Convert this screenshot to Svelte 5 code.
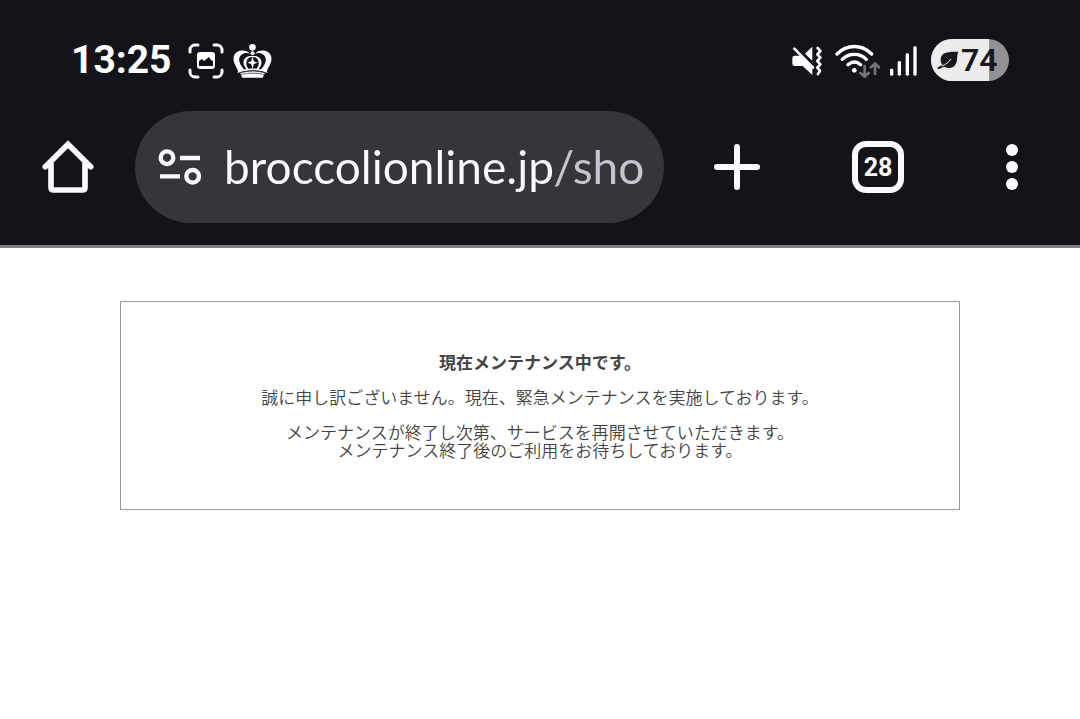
<script>
  let { time = '13:25', battery = 74, tabs = 28 } = $props();
  let url = $state('broccolionline.jp/sho');
</script>

<header>
  <div class="status">
    <time>{time}</time>
    <div class="notices">
      <svg width="36" height="36" viewBox="0 0 36 36" fill="none" aria-hidden="true">
        <path d="M2 9V7a5 5 0 0 1 5-5h3M26 2h3a5 5 0 0 1 5 5v2M34 27v2a5 5 0 0 1-5 5h-3M10 34H7a5 5 0 0 1-5-5v-2" stroke="#fff" stroke-width="3" stroke-linecap="round" />
        <rect x="9" y="9" width="18" height="17" rx="3" fill="#fff" />
        <path d="M11 23v-5l3-2 2 2 5-4 2 3 2 1v5z" fill="#131419" />
      </svg>
      <svg width="39" height="34" viewBox="0 0 116 102" fill="#fff" aria-hidden="true">
        <circle cx="58" cy="10" r="10" />
        <circle cx="58" cy="28" r="6" />
        <path fill-rule="evenodd" d="M50 29C38 14 2 16 1 44c0 16 12 26 14 40l-4 4c28-12 66-12 94 0l-4-4c2-14 14-24 14-40C114 16 78 14 66 29c12-6 32 0 32 18 0 12-10 22-14 29-4 0-6 0-8-1 14-14 12-34-8-39H48c-20 5-22 25-8 39-2 1-4 1-8 1-4-7-14-17-14-29 0-18 20-24 32-18z" />
        <path d="M49 40c-11 7-13 23-3 34 8-1 16-1 24 0 10-11 8-27-3-34z" fill="#131419" />
        <path d="M58 39l4 13 11 4-11 4-4 14-4-14-11-4 11-4z" />
        <path d="M18 88c26-9 54-9 80 0l-6 4c-22-6-46-6-68 0z" stroke="#131419" stroke-width="2" />
        <path d="M24 92c22-5 46-5 68 0l-3 9H27z" />
      </svg>
    </div>
    <div class="signals">
      <svg class="mute" width="30" height="30" viewBox="0 0 90 90" fill="#fff" aria-hidden="true">
        <path d="M8 29h17l36 36v22L32 60H8q-7 0-7-7V36q0-7 7-7z" />
        <path d="M61 2v42L39 23z" />
        <path d="M7 8l56 57" stroke="#fff" stroke-width="8" stroke-linecap="round" />
        <path d="M77 6l8 9-9 10 9 10-9 10 9 10-9 10 8 9-6 10" fill="none" stroke="#fff" stroke-width="8" stroke-linecap="round" stroke-linejoin="round" />
      </svg>
      <svg class="wifi" width="45" height="34" viewBox="0 0 135 102" fill="none" stroke="#fff" stroke-width="10" stroke-linecap="round" aria-hidden="true">
        <path d="M6 30c30-30 74-30 104 0M22 46c20-20 52-20 72 0M39 62c12-10 26-10 38 0" />
        <circle cx="58" cy="79" r="7" fill="#fff" stroke="none" />
        <path d="M89 66v31M77 87l12 11 12-11M120 90V59M108 70l12-11 12 11" stroke="#737478" stroke-width="8" />
      </svg>
      <svg width="27" height="30" viewBox="0 0 81 90" fill="#fff" aria-hidden="true">
        <rect x="0" y="68" width="10" height="21" rx="4" />
        <rect x="23" y="45" width="10" height="44" rx="4" />
        <rect x="47" y="22" width="10" height="67" rx="4" />
        <rect x="70" y="1" width="10" height="88" rx="4" />
      </svg>
      <div class="battery">
        <div class="level" style="width: {battery}%"></div>
        <svg width="22" height="19" viewBox="0 0 66 57" aria-hidden="true">
          <path d="M64 2C46 3 12-2 11 26c0 6 2 11 5 15L1 50l3 5 17-8c20 9 36 2 39-20 1-10 0-17 4-25z" fill="#17181d" />
          <path d="M14 45c12-4 21-11 28-21" fill="none" stroke="#ececed" stroke-width="3" />
        </svg>
        <span>{battery}</span>
      </div>
    </div>
  </div>

  <nav class="toolbar">
    <button class="home" aria-label="ホーム">
      <svg width="52" height="54" viewBox="0 0 156 162" fill="none" stroke="#fbf8ff" stroke-width="17" stroke-linecap="round" stroke-linejoin="miter" aria-hidden="true">
        <path d="M10 80l68-67 68 67" />
        <path d="M27 72v70q0 8 8 8h86q8 0 8-8V72" />
      </svg>
    </button>
    <div class="omnibox">
      <button class="site" aria-label="サイト情報">
        <svg width="44" height="38" viewBox="0 0 132 114" fill="none" stroke="#fbf8ff" stroke-width="13" aria-hidden="true">
          <circle cx="27" cy="29" r="19" />
          <path d="M66 30h60M6 85h60" />
          <circle cx="104" cy="85" r="19" />
        </svg>
      </button>
      <input type="text" aria-label="アドレス" bind:value={url} spellcheck="false" />
    </div>
    <button class="add" aria-label="新しいタブ">
      <svg width="46" height="46" viewBox="0 0 46 46" stroke="#fbf8ff" stroke-width="6" stroke-linecap="round" aria-hidden="true">
        <path d="M23 3v40M3 23h40" />
      </svg>
    </button>
    <button class="tabs" aria-label="タブ一覧"><span>{tabs}</span></button>
    <button class="menu" aria-label="メニュー">
      <svg width="12" height="46" viewBox="0 0 12 46" fill="#fbf8ff" aria-hidden="true">
        <circle cx="6" cy="6" r="6" />
        <circle cx="6" cy="23" r="6" />
        <circle cx="6" cy="40" r="6" />
      </svg>
    </button>
  </nav>
</header>

<main lang="ja">
  <section>
    <h1>現在メンテナンス中です。</h1>
    <p>誠に申し訳ございません。現在、緊急メンテナンスを実施しております。</p>
    <p>メンテナンスが終了し次第、サービスを再開させていただきます。<br />メンテナンス終了後のご利用をお待ちしております。</p>
  </section>
</main>

<style>
  :global(body) { background: #fff; }
  header { background: #131419; border-bottom: 3px solid #807f85; padding: 39px 0 22px; font-family: Roboto, sans-serif; color: #fff; }
  svg { display: block; flex: none; }
  button { display: flex; align-items: center; justify-content: center; padding: 0; border: 0; background: none; color: inherit; font: inherit; }

  .status { display: flex; align-items: center; height: 42px; padding: 0 71px; }
  time { font-size: 39px; font-weight: 700; line-height: 42px; }
  .notices { display: flex; align-items: center; gap: 9px; margin-left: 16px; padding-top: 2px; }
  .signals { display: flex; align-items: center; margin-left: auto; }
  .signals > svg { margin-top: 2px; }
  .mute { margin-right: 13px; }
  .wifi { margin-right: 10px; }
  .battery {
    position: relative; display: flex; align-items: center; gap: 2px; overflow: hidden;
    width: 78px; height: 42px; margin-left: 14px; padding-left: 6px; box-sizing: border-box;
    border-radius: 21px; background: #929294; color: #17181d;
  }
  .level { position: absolute; inset: 0 auto 0 0; background: #ececed; }
  .battery svg, .battery span { position: relative; }
  .battery span { font-size: 32px; font-weight: 600; line-height: 42px; }

  .toolbar { display: flex; align-items: center; margin-top: 30px; }
  .toolbar > button { flex: none; height: 112px; }
  .home { width: 135px; }
  .add { width: 146px; }
  .tabs { width: 136px; }
  .menu { width: 132px; margin-right: 2px; }
  .omnibox { flex: 1; min-width: 0; display: flex; align-items: center; gap: 22px; height: 112px; padding: 0 16px 0 23px; box-sizing: border-box; border-radius: 56px; background: #35363a; }
  .omnibox input {
    flex: 1; min-width: 0; height: 64px; padding: 0; border: 0; outline: 0;
    font: 400 46px/64px Lato, sans-serif; color: transparent; caret-color: #fff;
    background: linear-gradient(90deg, #fbf8ff 332px, #c6c5d0 332px); background-clip: text; -webkit-background-clip: text;
  }
  .tabs span { width: 40px; height: 40px; border: 6px solid #fbf8ff; border-radius: 14px; font-size: 25px; font-weight: 700; line-height: 41px; text-align: center; }

  main { padding: 53px 120px; font-family: "Noto Sans CJK JP", sans-serif; font-size: 17px; line-height: 18px; color: #444; }
  section { padding: 51px 20px 50px; border: 1px solid #999; text-align: center; }
  h1 { margin: 0; font-size: inherit; font-weight: 700; }
  p { margin: 17px 0 0; font-weight: 350; }
</style>
